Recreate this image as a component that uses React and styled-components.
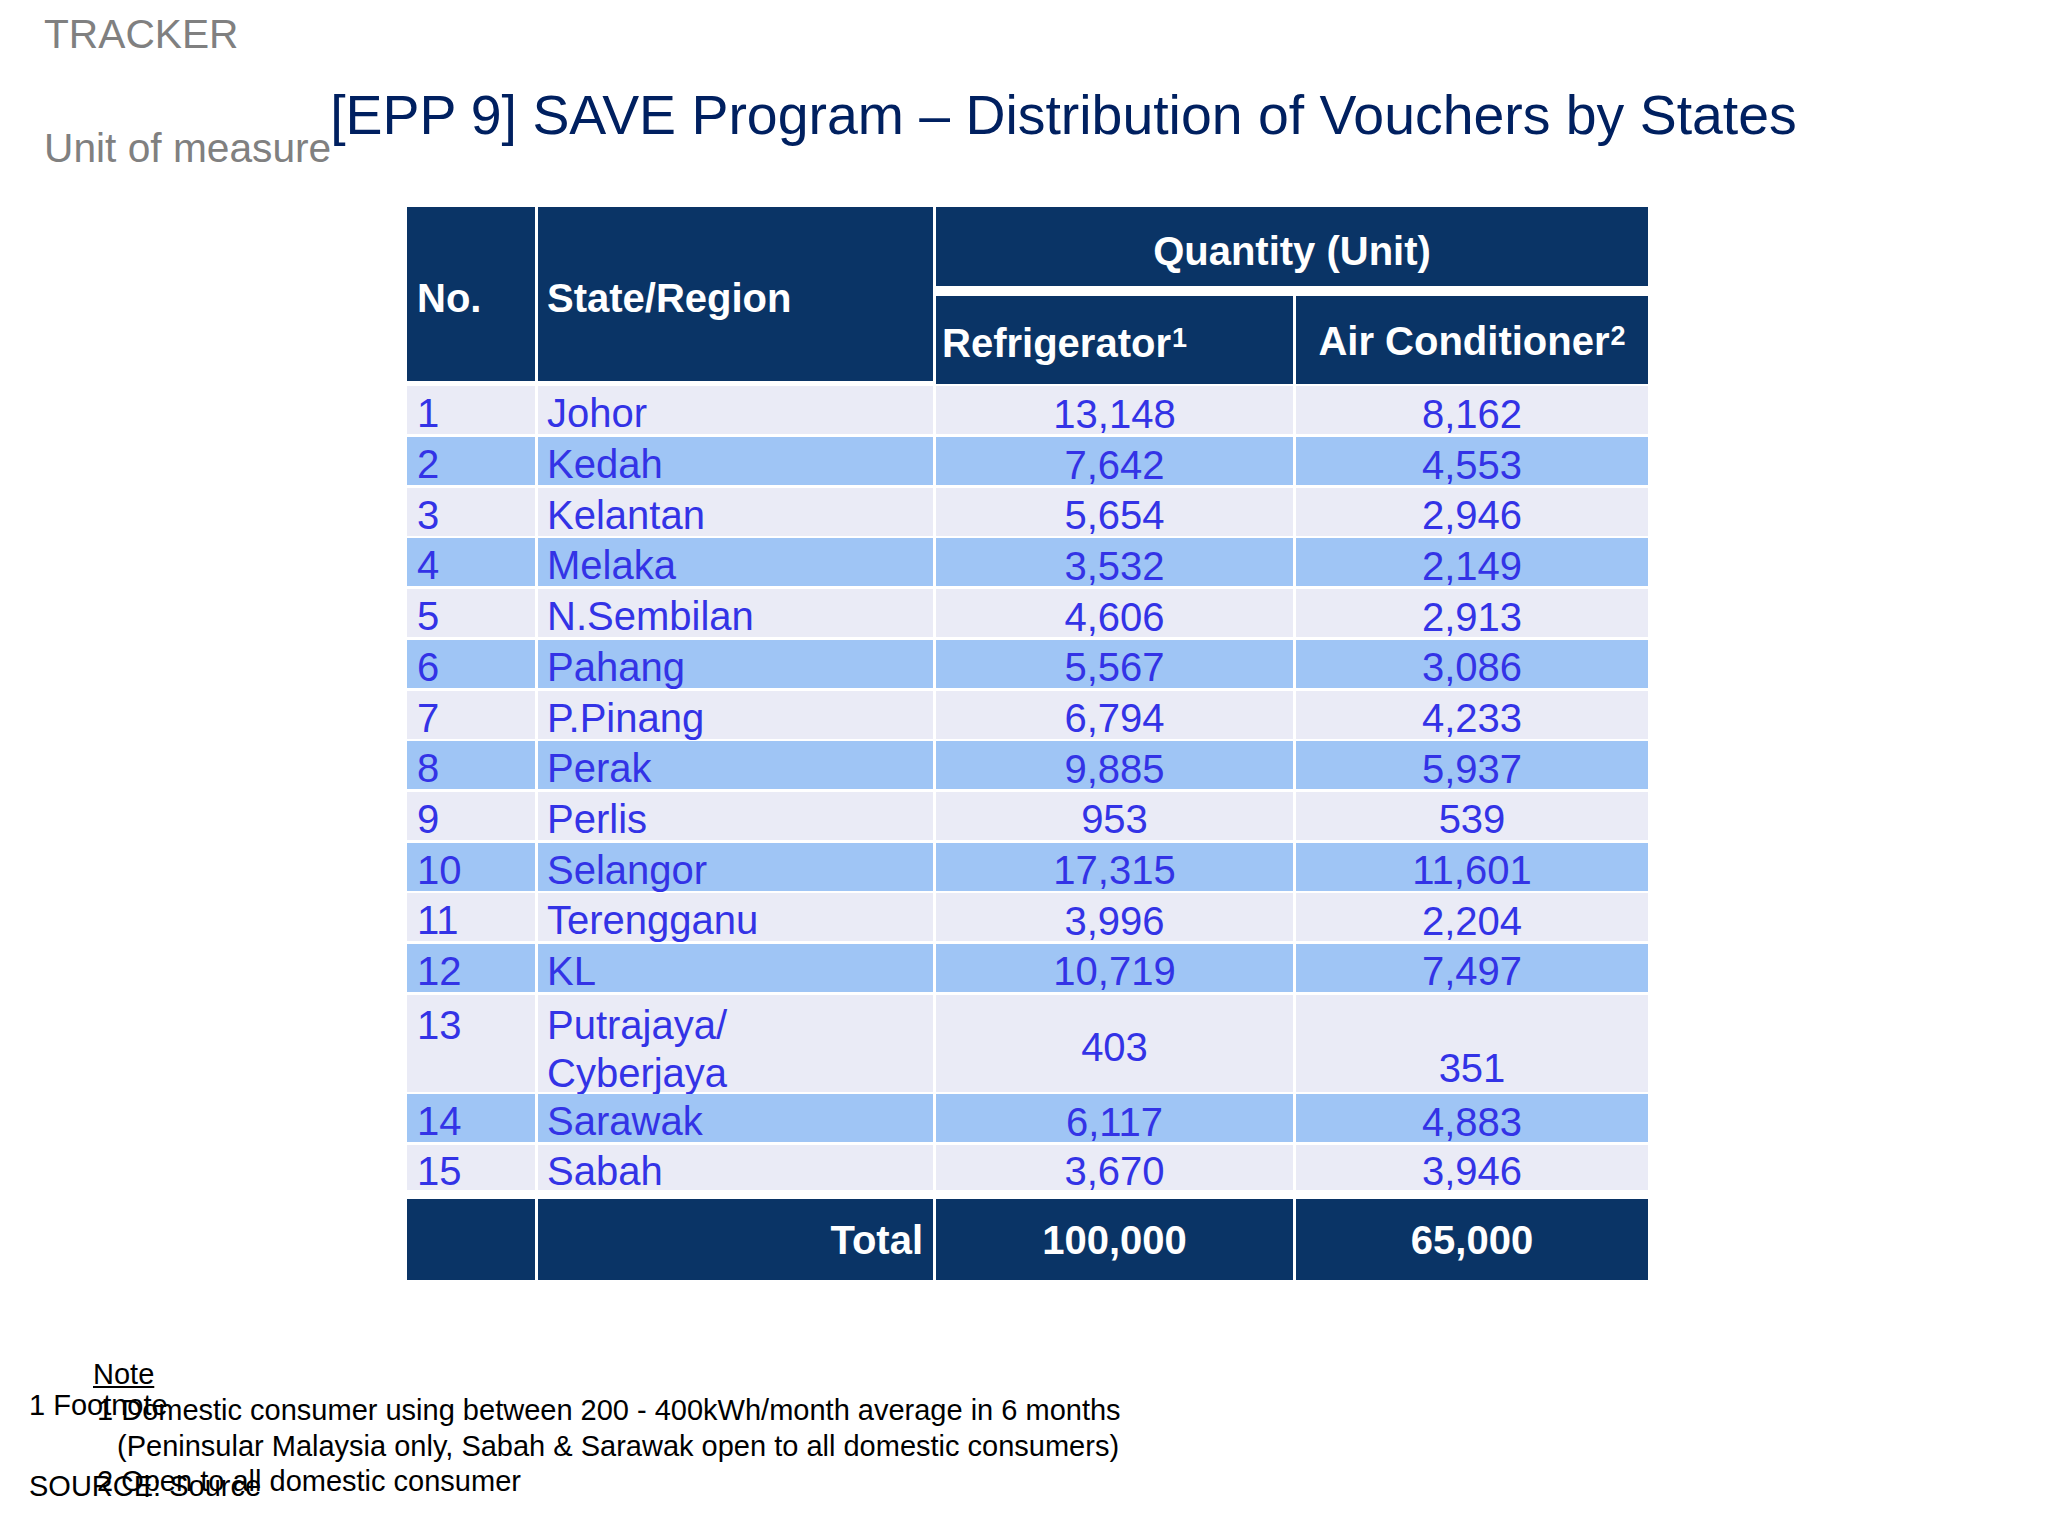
import React from 'react'
import styled, { createGlobalStyle } from 'styled-components'

const GlobalStyle = createGlobalStyle`
  body {
    margin: 0;
    background: #ffffff;
    font-family: 'Liberation Sans', Arial, sans-serif;
  }
`

const colors = {
  navy: '#0a3466',
  titleNavy: '#002060',
  light: '#eaebf6',
  blue: '#9fc5f5',
  text: '#3333e6',
  grey: '#808080',
}

const rows = [
  { no: 1, state: 'Johor', fridge: '13,148', ac: '8,162' },
  { no: 2, state: 'Kedah', fridge: '7,642', ac: '4,553' },
  { no: 3, state: 'Kelantan', fridge: '5,654', ac: '2,946' },
  { no: 4, state: 'Melaka', fridge: '3,532', ac: '2,149' },
  { no: 5, state: 'N.Sembilan', fridge: '4,606', ac: '2,913' },
  { no: 6, state: 'Pahang', fridge: '5,567', ac: '3,086' },
  { no: 7, state: 'P.Pinang', fridge: '6,794', ac: '4,233' },
  { no: 8, state: 'Perak', fridge: '9,885', ac: '5,937' },
  { no: 9, state: 'Perlis', fridge: '953', ac: '539' },
  { no: 10, state: 'Selangor', fridge: '17,315', ac: '11,601' },
  { no: 11, state: 'Terengganu', fridge: '3,996', ac: '2,204' },
  { no: 12, state: 'KL', fridge: '10,719', ac: '7,497' },
  { no: 13, state: ['Putrajaya/', 'Cyberjaya'], fridge: '403', ac: '351', tall: true },
  { no: 14, state: 'Sarawak', fridge: '6,117', ac: '4,883' },
  { no: 15, state: 'Sabah', fridge: '3,670', ac: '3,946' },
]

const Page = styled.div`
  width: 2048px;
  min-height: 1534px;
  padding-top: 11px;
  box-sizing: border-box;
`

const Header = styled.div`
  display: flex;
  align-items: flex-start;
  padding-left: 44px;
`

const SideLabels = styled.div`
  display: flex;
  flex-direction: column;
`

const GreyLabel = styled.div`
  color: ${colors.grey};
  font-size: 40.7px;
  line-height: 46px;
  margin-top: ${p => p.$gap || 0}px;
  white-space: nowrap;
`

const Title = styled.h1`
  margin: 72px 0 0 -1px;
  font-size: 55.4px;
  line-height: 64px;
  font-weight: 400;
  color: ${colors.titleNavy};
  white-space: nowrap;
`

const Table = styled.div`
  display: grid;
  grid-template-columns: 128px 395px 357px 352px;
  grid-template-rows: 86px 88px repeat(12, 48px) 97px 48px 45px 87px;
  column-gap: 3px;
  row-gap: 2.7px;
  margin: 36px 0 0 407px;
  width: max-content;
`

const backgrounds = {
  head: colors.navy,
  light: colors.light,
  blue: colors.blue,
}

const Cell = styled.div`
  display: flex;
  align-items: ${p => p.$v || 'center'};
  justify-content: ${p => p.$h || 'flex-start'};
  background: ${p => backgrounds[p.$tone]};
  color: ${p => (p.$tone === 'head' ? '#ffffff' : colors.text)};
  font-size: 40px;
  line-height: 48px;
  font-weight: ${p => (p.$tone === 'head' ? 700 : 400)};
  padding: ${p => p.$pad || '0 10px'};
  grid-row: ${p => p.$row || 'auto'};
  grid-column: ${p => p.$col || 'auto'};
  margin: ${p => p.$margin || 0};
  white-space: nowrap;
  box-sizing: border-box;

  sup {
    font-size: 27px;
    line-height: 0;
    position: relative;
    top: -5px;
    margin-left: 1px;
  }
`

const StackedName = styled.span`
  display: flex;
  flex-direction: column;
  line-height: 48.5px;
`

const Notes = styled.div`
  display: grid;
  margin-top: 77px;
  color: #000000;
  font-size: 29px;
  line-height: 35.5px;

  & > * {
    grid-area: 1 / 1;
  }
`

const SourceCol = styled.div`
  display: flex;
  flex-direction: column;
  padding-left: 29px;
`

const SourceLine = styled.div`
  margin-top: ${p => p.$gap}px;
  white-space: nowrap;
`

const NoteCol = styled.div`
  display: flex;
  flex-direction: column;
  padding-left: 93px;
`

const NoteHead = styled.div`
  text-decoration: underline;
  margin-bottom: 1px;
`

const NoteLine = styled.div`
  padding-left: ${p => (p.$hang ? 24 : 4)}px;
  white-space: nowrap;
`

const App = () => (
  <Page>
    <GlobalStyle />
    <Header>
      <SideLabels>
        <GreyLabel>TRACKER</GreyLabel>
        <GreyLabel $gap={68}>Unit of measure</GreyLabel>
      </SideLabels>
      <Title>[EPP 9] SAVE Program – Distribution of Vouchers by States</Title>
    </Header>

    <Table>
      <Cell $tone="head" $row="1 / span 2" $margin="0 0 3px 0" $pad="8px 0 0 10px">No.</Cell>
      <Cell $tone="head" $row="1 / span 2" $margin="0 0 3px 0" $pad="8px 0 0 9px">State/Region</Cell>
      <Cell $tone="head" $col="3 / span 2" $h="center" $margin="0 0 7px 0" $pad="8px 0 0">
        Quantity (Unit)
      </Cell>
      <Cell $tone="head" $pad="6px 0 0 6px">
        Refrigerator<sup>1</sup>
      </Cell>
      <Cell $tone="head" $h="center" $pad="2px 0 0">
        Air Conditioner<sup>2</sup>
      </Cell>

      {rows.map((r, i) => {
        const tone = i % 2 === 0 ? 'light' : 'blue'
        return (
          <React.Fragment key={r.no}>
            <Cell $tone={tone} $v={r.tall ? 'flex-start' : 'center'} $pad="6px 10px 0">
              {r.no}
            </Cell>
            <Cell $tone={tone} $v={r.tall ? 'flex-start' : 'center'} $pad="6px 9px 0">
              {r.tall ? (
                <StackedName>
                  {r.state.map(s => (
                    <span key={s}>{s}</span>
                  ))}
                </StackedName>
              ) : (
                r.state
              )}
            </Cell>
            <Cell $tone={tone} $h="center" $pad="7px 0 0">
              {r.fridge}
            </Cell>
            <Cell $tone={tone} $h="center" $v={r.tall ? 'flex-end' : 'center'} $pad="7px 0 0">
              {r.ac}
            </Cell>
          </React.Fragment>
        )
      })}

      <Cell $tone="head" $margin="6px 0 0" />
      <Cell $tone="head" $h="flex-end" $margin="6px 0 0" $pad="2px 10px 0">Total</Cell>
      <Cell $tone="head" $h="center" $margin="6px 0 0" $pad="2px 0 0">100,000</Cell>
      <Cell $tone="head" $h="center" $margin="6px 0 0" $pad="2px 0 0">65,000</Cell>
    </Table>

    <Notes>
      <SourceCol>
        <SourceLine $gap={31}>1 Footnote</SourceLine>
        <SourceLine $gap={46}>SOURCE: Source</SourceLine>
      </SourceCol>
      <NoteCol>
        <NoteHead>Note</NoteHead>
        <NoteLine>1 Domestic consumer using between 200 - 400kWh/month average in 6 months</NoteLine>
        <NoteLine $hang>(Peninsular Malaysia only, Sabah &amp; Sarawak open to all domestic consumers)</NoteLine>
        <NoteLine>2 Open to all domestic consumer</NoteLine>
      </NoteCol>
    </Notes>
  </Page>
)

export default App
